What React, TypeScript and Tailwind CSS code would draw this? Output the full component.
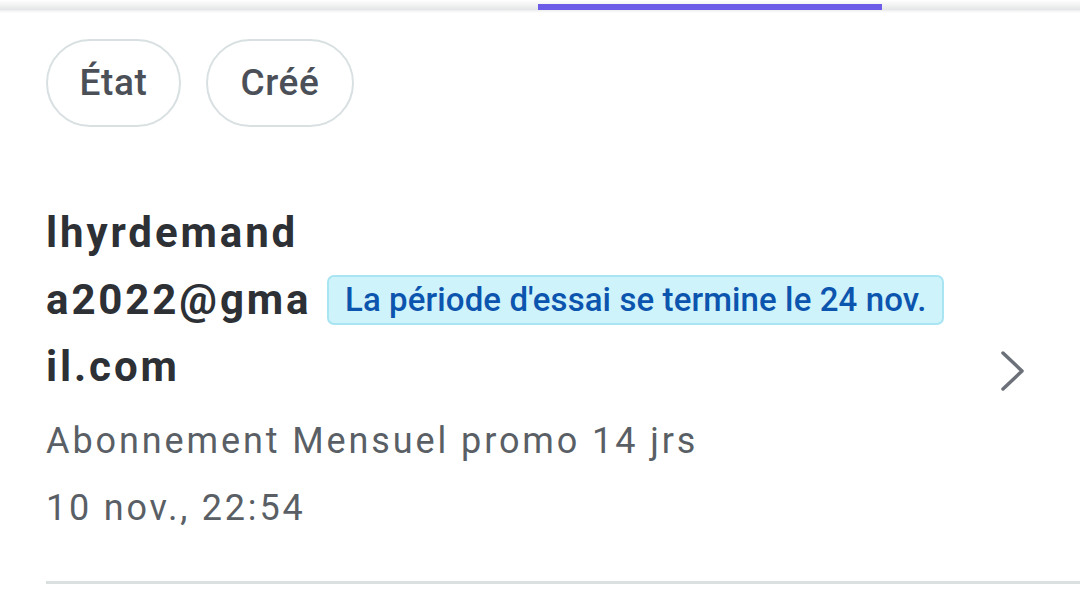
export default function App() {
  return (
    <div className="w-[1080px] h-[595px] bg-white overflow-hidden relative" style={{ fontFamily: 'Roboto, "Noto Sans", sans-serif' }}>
      {/* top tab bar edge */}
      <div className="h-[10px] bg-gradient-to-b from-white to-[#e4e5e6] relative">
        <div className="absolute left-[538px] top-[4px] w-[344px] h-[6px] bg-[#6c5ce7]" />
      </div>
      <div className="h-[3px] bg-gradient-to-b from-[#eeeeee] to-white" />

      <div className="pl-[46px]">
        <div className="flex gap-[25px] mt-[26px]">
          <div className="h-[88px] w-[135px] rounded-full border-2 border-[#d9e0e2] flex items-center justify-center text-[37px] font-medium tracking-[0.6px] text-[#4b5058]">État</div>
          <div className="h-[88px] w-[148px] rounded-full border-2 border-[#d9e0e2] flex items-center justify-center text-[37px] font-medium tracking-[0.6px] text-[#4b5058]">Créé</div>
        </div>

        <div className="flex items-center mt-[72px] pr-[52px]">
          <div className="flex-1">
            <div className="flex items-center">
              <div className="w-[272px] text-[42px] leading-[67px] font-bold tracking-[2.9px] text-[#2d3035]">
                <div>lhyrdemand</div>
                <div>a2022@gma</div>
                <div>il.com</div>
              </div>
              <div className="ml-[9px] h-[50px] px-[16px] flex items-center rounded-[7px] bg-[#cff3fb] border-2 border-[#a8e4f1] text-[33px] font-medium tracking-[0.1px] text-[#0c55ae]">La période d'essai se termine le 24 nov.</div>
            </div>
            <div className="mt-[8px] text-[36px] leading-[67px] tracking-[2.9px] text-[#5a5f66]">Abonnement Mensuel promo 14 jrs</div>
            <div className="text-[36px] leading-[67px] tracking-[2.8px] text-[#5a5f66]">10 nov., 22:54</div>
          </div>
          <svg width="30" height="44" viewBox="0 0 30 44">
            <path d="M5 4 L24 22 L5 40" fill="none" stroke="#6b7079" strokeWidth="3.5" strokeLinecap="round" strokeLinejoin="round" />
          </svg>
        </div>

        <div className="mt-[39px] h-[3px] bg-[#dadfe0]" />
      </div>
    </div>
  );
}
